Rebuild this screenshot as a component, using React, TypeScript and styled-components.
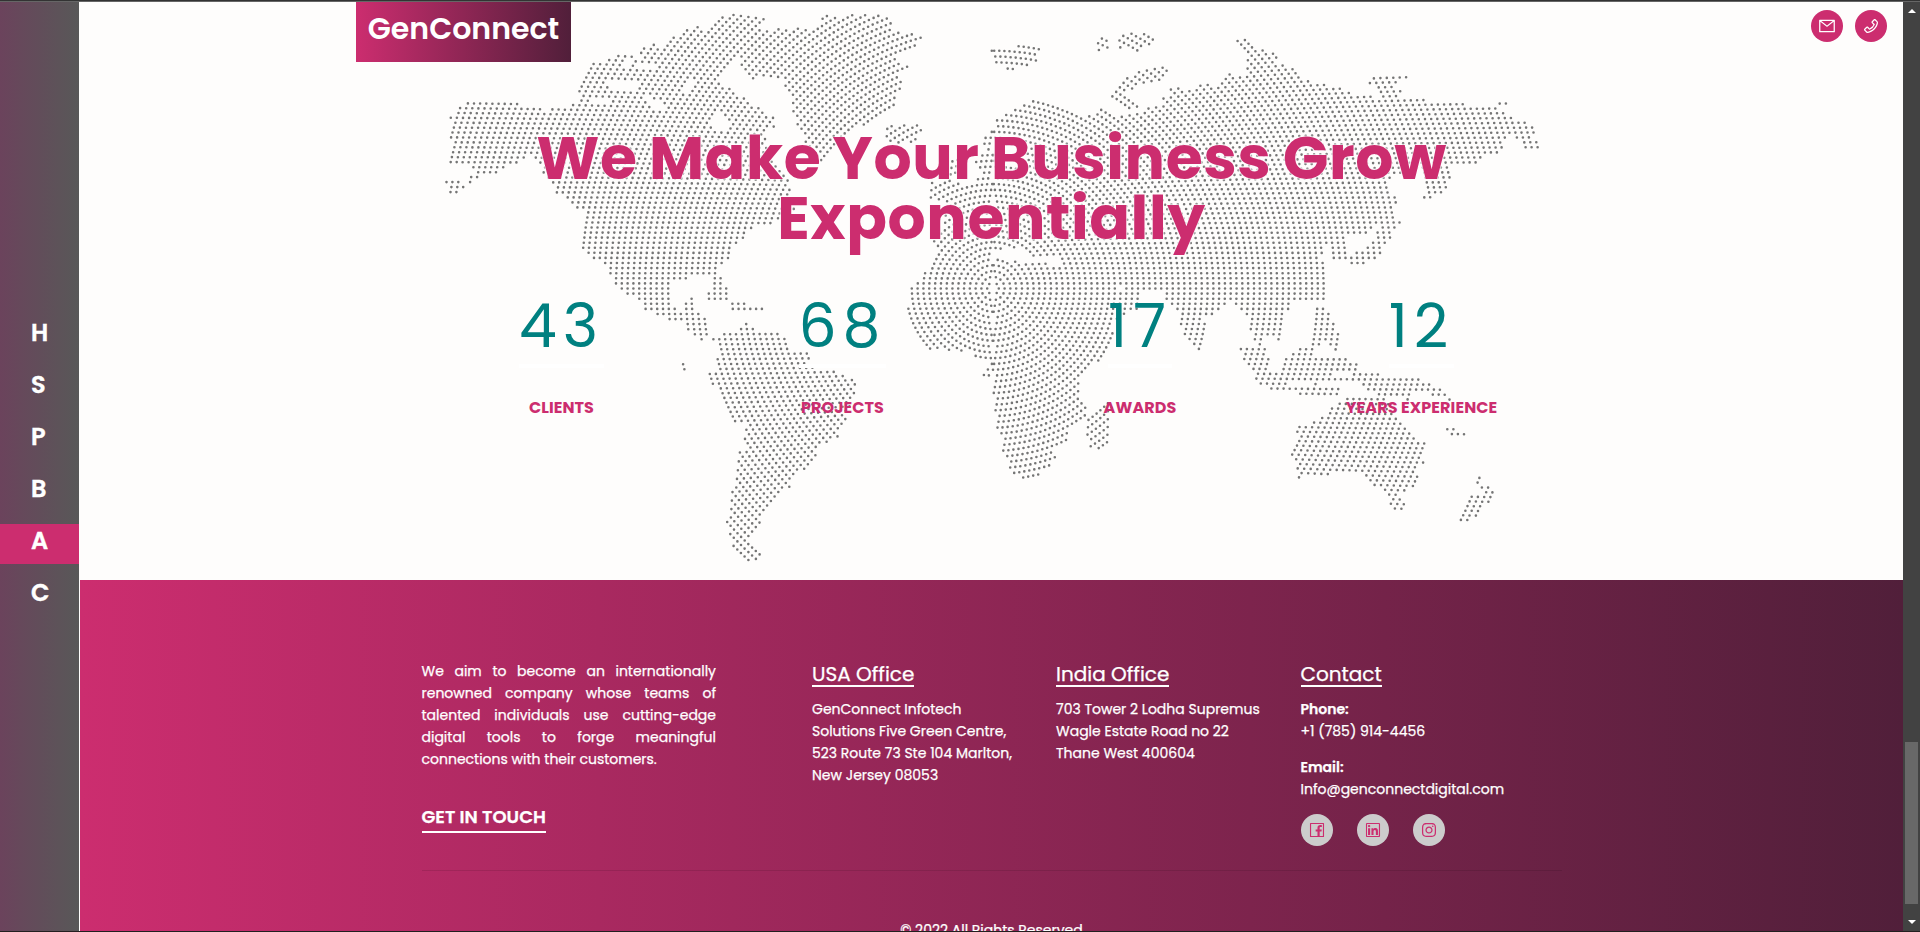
import React, { useMemo } from "react";
import styled, { createGlobalStyle } from "styled-components";
import {
  AiOutlineFacebook,
  AiOutlineInstagram,
  AiOutlineLinkedin,
  AiOutlineMail,
  AiOutlinePhone,
} from "react-icons/ai";

const PINK = "#cc2d6f";
const PLUM = "#511f3a";
const PAPER = "#fefdfc";

const GlobalStyle = createGlobalStyle`
  *, *::before, *::after { box-sizing: border-box; }
  body {
    margin: 0;
    background: ${PAPER};
    font-family: Poppins, Inter, "Liberation Sans", sans-serif;
    overflow: hidden;
  }
  h1, h2, p { margin: 0; }
`;

/* ---------- dotted world map ---------- */

type Point = [number, number];
type Outline = Point[];

const parse = (text: string): Outline =>
  text
    .trim()
    .split(/\s+/)
    .map((pair) => pair.split(",").map(Number) as Point);

/* The outlines are drawn on two sheets; origin and scale place each one. */
const sheet = (originX: number, scaleX: number, outlines: string[]): Outline[] =>
  outlines.map((text) =>
    parse(text).map(([x, y]) => [originX + x / scaleX, y / 3] as Point)
  );

const LAND: Outline[] = [
  ...sheet(430, 2.8, [
    // North and Central America
    `45,345 70,338 90,318 110,308 135,300 240,302 265,320 330,330 365,320 395,320 408,305
     418,292 412,280 430,215 460,183 480,188 530,165 570,170 590,190 590,150 625,130 645,145
     660,140 680,112 725,82 750,80 765,92 790,85 800,70 820,48 870,42 900,44 940,50 945,65
     930,85 905,120 862,172 845,190 820,205 803,238 825,255 860,280 890,300 920,318 935,345
     960,352 967,378 945,395 940,430 975,500 1000,535 1018,575 1000,592 1035,625 990,640
     975,662 945,680 915,675 890,702 855,732 842,755 832,787 815,792 812,815 816,853 830,860
     830,900 828,945 850,893 880,908 910,923 947,925 925,940 825,940 822,905 805,895 793,908
     772,898 775,875 790,880 790,835 760,832 740,828 715,838 680,838 668,842 668,925 682,908
     690,930 710,935 712,910 728,903 725,885 748,890 748,930 770,950 765,945 785,938 772,955
     777,1015 755,1025 738,1000 720,992 705,970 665,955 635,955 630,938 600,938 583,898
     560,885 550,885 535,875 517,852 503,832 500,795 470,785 443,770 427,745 427,700 440,655
     430,632 410,622 385,594 355,580 330,540 308,505 300,478 270,470 228,498 210,495 190,525
     140,520 95,490 45,492 50,460 75,430 45,420 55,385 75,355 48,355`,
    // Aleutian islands
    `45,545 70,540 98,552 103,524 150,520 120,542 100,565 68,580 45,572`,
    // Ellesmere island and Greenland
    `920,88 970,85 1085,85 1085,68 1100,48 1240,44 1290,44 1300,95 1330,97 1392,100 1365,132
     1340,157 1310,167 1305,188 1337,190 1337,215 1312,225 1322,258 1310,285 1302,332
     1250,360 1190,388 1165,405 1128,455 1105,490 1085,480 1060,440 1040,402 1018,378
     1022,340 1008,335 1018,320 1008,290 988,262 990,245 968,238 930,228 905,236 868,200
     862,172 905,120`,
    // Iceland
    `1273,402 1280,368 1315,378 1345,370 1378,378 1367,425 1310,438 1278,420`,
    // Galapagos
    `701,1090 711,1090 715,1114 705,1114`,
    // South America
    `788,1020 805,1008 835,990 860,990 880,968 900,980 915,995 965,990 985,1015 1005,1020
     1010,1050 1068,1053 1055,1090 1040,1102 1082,1102 1130,1115 1190,1140 1198,1150
     1187,1195 1167,1235 1162,1270 1140,1317 1105,1332 1087,1355 1082,1380 1047,1414
     1007,1435 1007,1467 975,1484 957,1510 937,1535 927,1575 907,1600 897,1630 912,1652
     934,1646 914,1684 880,1680 850,1647 833,1605 830,1565 843,1520 848,1460 860,1420
     860,1352 880,1358 880,1290 885,1262 848,1265 828,1220 813,1175 788,1158 776,1120
     798,1108 798,1080 810,1060 803,1035`,
  ]),
  ...sheet(960, 2.613, [
    // Europe and Asia
    `-90,592 -75,548 -30,535 10,550 40,540 60,530 50,512 33,490 63,450 63,415 73,398 93,380
     93,360 128,333 172,305 225,300 257,312 285,325 310,343 335,350 375,320 397,330 410,345
     440,347 478,335 500,318 525,325 525,303 540,285 555,260 600,268 632,248 670,260 678,232
     708,214 730,225 752,215 750,195 752,180 733,155 703,120 748,110 775,148 822,152 830,190
     872,200 895,240 937,250 1000,260 1020,275 1033,302 1035,284 1080,284 1100,302 1177,292
     1250,308 1397,318 1440,348 1497,376 1500,398 1450,402 1425,405 1417,460 1365,474
     1345,490 1278,488 1283,530 1267,580 1230,596 1207,595 1218,560 1213,530 1200,500
     1120,540 1122,580 1142,590 1132,640 1092,655 1087,670 1065,700 1010,708 1010,775
     976,778 973,742 950,740 940,778 961,788 963,900 935,900 868,897 867,930 850,930 850,970
     842,1023 820,1023 822,1005 797,1005 792,1037 770,1037 760,1000 747,990 752,960 738,935
     725,915 710,905 687,915 657,945 637,958 647,1000 642,1030 632,1052 603,1037 578,990
     566,970 573,930 548,915 533,885 530,873 478,873 478,900 462,930 425,945 402,975 397,1010
     392,1058 360,1085 342,1110 318,1125 312,1165 318,1200 333,1215 328,1245 290,1282
     283,1300 278,1335 250,1350 247,1387 218,1415 203,1438 133,1433 130,1390 118,1375
     108,1362 112,1330 103,1310 93,1290 88,1190 83,1145 60,1125 63,1098 80,1095 78,1078
     45,1072 20,1055 -20,1050 -69,1055 -99,1040 -128,985 -137,920 -139,880 -107,838 -88,808
     -80,785 -55,755 -70,725 -45,672 -42,612`,
    // Great Britain and Ireland
    `-30,478 15,478 18,520 -10,532 -40,525`,
    // Japan and Sakhalin
    `1100,640 1157,662 1137,690 1115,732 1100,772 1060,792 1030,808 1008,792 1033,755
     1065,740 1090,702`,
    // Kamchatka tip
    `1450,402 1475,402 1508,420 1510,444 1468,444`,
    // Svalbard
    `76,138 153,138 155,126 228,140 202,166 197,197 150,192 152,224 116,220 113,190 83,187`,
    // Franz Josef land
    `346,114 390,108 387,133 415,138 414,112 462,94 522,118 472,154 420,146 360,152`,
    // Novaya Zemlya
    `391,298 416,255 441,226 491,201 515,194 552,206 527,244 482,250 454,267 434,284 449,302
     484,322 462,334 414,320`,
    // New Siberian islands
    `1064,247 1076,226 1165,222 1194,242 1114,250 1154,272 1142,294 1103,294 1086,262`,
    `1400,302 1428,302 1428,312 1400,312`,
    // Madagascar
    `388,1195 402,1215 390,1265 392,1297 377,1354 350,1352 328,1320 333,1240 365,1225`,
    // Sumatra
    `733,1043 805,1043 812,1110 837,1122 857,1155 912,1163 912,1173 812,1172 773,1140
     733,1062`,
    // Borneo, Philippines and Sulawesi
    `838,1073 868,1062 890,1043 908,1043 910,1005 928,990 933,920 957,920 972,955 987,975
     992,1050 968,1052 960,1025 945,1025 927,1062 965,1077 1012,1076 1042,1090 1042,1113
     985,1114 965,1110 977,1130 955,1144 830,1144 843,1100`,
    // Java and Timor
    `888,1178 928,1148 940,1163 997,1163 994,1188 890,1188`,
    // New Guinea
    `978,1136 1028,1122 1097,1121 1140,1136 1197,1136 1232,1153 1267,1173 1282,1203
     1250,1192 1213,1173 1172,1176 1177,1204 1140,1192 1095,1190 1063,1172 1053,1152
     980,1145`,
    // Australia
    `1008,1194 1077,1194 1100,1185 1112,1200 1127,1225 1152,1268 1177,1298 1190,1314
     1217,1328 1212,1396 1192,1412 1197,1436 1182,1465 1152,1480 1167,1505 1150,1534
     1118,1516 1123,1495 1103,1472 1078,1460 1055,1432 1045,1418 967,1418 967,1430 893,1428
     890,1440 880,1440 876,1415 885,1400 864,1368 877,1340 878,1276 925,1268 948,1250
     973,1213`,
    // New Zealand
    `1358,1416 1374,1436 1362,1452 1387,1460 1408,1482 1377,1514 1352,1540 1337,1568
     1298,1568 1318,1523 1328,1490 1373,1490 1368,1470 1343,1452`,
    // New Caledonia
    `1268,1286 1292,1286 1322,1302 1318,1310 1295,1308 1268,1294`,
  ]),
];

const WATER: Outline[] = [
  ...sheet(430, 2.8, [
    `500,237 590,248 590,264 545,266 505,263`,
    `595,282 665,318 645,332 595,302`,
    `700,262 732,238 745,252 705,283`,
    `790,365 812,335 838,372 842,395 795,388`,
    `535,185 560,180 562,196 540,200`,
    `575,190 625,190 625,205 590,212`,
    `452,302 500,288 505,302 462,320`,
  ]),
  ...sheet(960, 2.613, [
    `82,752 110,745 165,745 185,772 245,772 268,785 265,796 205,785 140,785 82,772`,
    `412,858 430,858 430,872 412,872`,
    `110,480 150,500 180,470 150,440 120,450`,
  ]),
];

const contains = (outline: Outline, x: number, y: number) => {
  let inside = false;
  for (let i = 0, j = outline.length - 1; i < outline.length; j = i++) {
    const [xi, yi] = outline[i];
    const [xj, yj] = outline[j];
    if (yi > y !== yj > y && x < ((xj - xi) * (y - yi)) / (yj - yi) + xi) inside = !inside;
  }
  return inside;
};

/* Dots sit on concentric rings round central Africa, evenly spaced along each ring. */
const CENTER_X = 993;
const CENTER_Y = 288.5;
const RING_GAP = 5.8;
const DOT_GAP = 5.1;

const buildDots = () => {
  const parts: string[] = [];
  for (let ring = 1; ring <= 100; ring++) {
    const r = ring * RING_GAP;
    const count = Math.floor((r * Math.PI) / 2 / DOT_GAP);
    for (const side of [1, -1]) {
      for (let k = -count; k <= count; k++) {
        const angle = (k * DOT_GAP) / r;
        const x = CENTER_X + side * r * Math.cos(angle);
        const y = CENTER_Y + r * Math.sin(angle);
        if (
          LAND.some((o) => contains(o, x, y)) &&
          !WATER.some((o) => contains(o, x, y))
        ) {
          parts.push(`M${x.toFixed(1)} ${y.toFixed(1)}h0`);
        }
      }
    }
  }
  return parts.join("");
};

const MapSvg = styled.svg`
  position: absolute;
  left: 0;
  top: 0;
  width: 1823px;
  height: 578px;
`;

const WorldMap = () => {
  const d = useMemo(buildDots, []);
  return (
    <MapSvg viewBox="80 2 1823 578" aria-hidden="true">
      <path d={d} stroke="#757575" strokeWidth="2.6" strokeLinecap="round" fill="none" />
    </MapSvg>
  );
};

/* ---------- page frame ---------- */

const Window = styled.div`
  display: flex;
  height: 932px;
  border-top: 1px solid #333;
  border-bottom: 1px solid #231f20;
  overflow: hidden;
`;

const Frame = styled.div`
  display: flex;
  flex: 1;
  min-width: 0;
  border-top: 1px solid #666;
`;

const Sidebar = styled.nav`
  display: flex;
  flex-direction: column;
  justify-content: center;
  gap: 12px;
  width: 79px;
  padding-bottom: 2px;
  background: linear-gradient(90deg, #6b435c, #585858);
`;

const SideLink = styled.a<{ $active?: boolean }>`
  height: 40px;
  padding-left: 31px;
  color: #fff;
  font-size: 24px;
  font-weight: 600;
  line-height: 33px;
  -webkit-text-stroke: 0.4px #fff;
  background: ${(p) => (p.$active ? PINK : "transparent")};
`;

const Main = styled.main`
  display: flex;
  flex-direction: column;
  width: 1824px;
  padding-left: 1px;
  overflow: hidden;
`;

const Scrollbar = styled.div`
  display: flex;
  flex-direction: column;
  align-items: center;
  width: 17px;
  padding: 7px 0;
  background: #424242;
`;

const Arrow = styled.i<{ $down?: boolean }>`
  border: 4px solid transparent;
  border-top-width: ${(p) => (p.$down ? "4px" : "0")};
  border-bottom-width: ${(p) => (p.$down ? "0" : "4px")};
  border-${(p) => (p.$down ? "top" : "bottom")}-color: #fff;
`;

const Thumb = styled.div`
  width: 13px;
  height: 162px;
  margin: auto 0 16px;
  background: #686868;
`;

/* ---------- hero ---------- */

const Hero = styled.section`
  position: relative;
  height: 578px;
  flex: none;
  background: ${PAPER};
`;

const TopBar = styled.header`
  position: relative;
  display: flex;
  justify-content: space-between;
  height: 60px;
  padding: 0 16px 0 276px;
`;

const Logo = styled.div`
  width: 215px;
  height: 60px;
  color: #fff;
  font-size: 30px;
  font-weight: 600;
  line-height: 54px;
  text-align: center;
  background: linear-gradient(90deg, ${PINK}, ${PLUM});
`;

const Actions = styled.div<{ $gap: number }>`
  display: flex;
  gap: ${(p) => p.$gap}px;
`;

const RoundButton = styled.a<{ $light?: boolean }>`
  display: flex;
  align-items: center;
  justify-content: center;
  width: 32px;
  height: 32px;
  border-radius: 50%;
  color: ${(p) => (p.$light ? PINK : "#fff")};
  background: ${(p) => (p.$light ? "#cccccc" : PINK)};
`;

const TopActions = styled(Actions)`
  padding-top: 8px;
`;

const Headline = styled.h1`
  position: relative;
  margin-top: 66px;
  color: ${PINK};
  font-size: 60px;
  font-weight: 700;
  line-height: 60px;
  letter-spacing: 0.6px;
  word-spacing: -1.9px;
  text-align: center;
  text-shadow: 0 0 2px #fff, 0 0 2px #fff, 0 0 3px #fff;
`;

const Stats = styled.div`
  position: relative;
  display: grid;
  grid-template-columns: 281px 281px 314px 249px;
  padding-left: 341px;
  margin-top: 40px;
`;

const Stat = styled.div`
  display: flex;
  flex-direction: column;
  align-items: center;
`;

const Figure = styled.span`
  border-bottom: 4px solid #fff;
  color: #008080;
  font-size: 60px;
  line-height: 76px;
  letter-spacing: 6px;
`;

const Caption = styled.span`
  margin-top: 28px;
  color: ${PINK};
  font-size: 16px;
  font-weight: 700;
  line-height: 24px;
  letter-spacing: 0.08px;
`;

/* ---------- footer ---------- */

const Footer = styled.footer`
  flex: 1;
  min-height: 0;
  color: #fff;
  font-size: 14px;
  line-height: 22px;
  -webkit-text-stroke: 0.25px #fff;
  background: linear-gradient(90deg, ${PINK}, ${PLUM});
`;

const Container = styled.div`
  width: 1140px;
  margin: 0 auto;
  padding-top: 80px;
`;

const Columns = styled.div`
  display: grid;
  grid-template-columns: 390.5px 244px 244.5px 1fr;
  height: 210px;
`;

const Mission = styled.p`
  width: 294.5px;
  text-align: justify;
`;

const TouchLink = styled.a`
  display: inline-block;
  margin-top: 31px;
  border-bottom: 2px solid #fff;
  font-size: 18px;
  font-weight: 600;
  line-height: 28px;
  padding-top: 2px;
`;

const ColumnTitle = styled.h2`
  width: fit-content;
  margin-bottom: 11px;
  border-bottom: 2px solid #fff;
  font-size: 20px;
  font-weight: 400;
  line-height: 22px;
  padding-top: 3px;
`;

const Lines = styled.p`
  margin-bottom: 14px;
  white-space: pre-line;

  b {
    font-weight: 600;
  }
`;

const Legal = styled.div`
  border-top: 1px solid rgba(0, 0, 0, 0.1);
  padding-top: 48px;
  text-align: center;
`;

const NAV = ["H", "S", "P", "B", "A", "C"];

const STATS = [
  ["43", "CLIENTS"],
  ["68", "PROJECTS"],
  ["17", "AWARDS"],
  ["12", "YEARS EXPERIENCE"],
];

export default function App() {
  return (
    <Window>
      <GlobalStyle />
      <Frame>
        <Sidebar>
          {NAV.map((letter) => (
            <SideLink key={letter} $active={letter === "A"}>
              {letter}
            </SideLink>
          ))}
        </Sidebar>
        <Main>
          <Hero>
            <WorldMap />
            <TopBar>
              <Logo>GenConnect</Logo>
              <TopActions $gap={12}>
                <RoundButton>
                  <AiOutlineMail size={18} />
                </RoundButton>
                <RoundButton>
                  <AiOutlinePhone size={18} />
                </RoundButton>
              </TopActions>
            </TopBar>
            <Headline>
              We Make Your Business Grow
              <br />
              Exponentially
            </Headline>
            <Stats>
              {STATS.map(([value, label]) => (
                <Stat key={label}>
                  <Figure>{value}</Figure>
                  <Caption>{label}</Caption>
                </Stat>
              ))}
            </Stats>
          </Hero>
          <Footer>
            <Container>
              <Columns>
                <div>
                  <Mission>
                    We aim to become an internationally renowned company whose teams of
                    talented individuals use cutting-edge digital tools to forge meaningful
                    connections with their customers.
                  </Mission>
                  <TouchLink>GET IN TOUCH</TouchLink>
                </div>
                <div>
                  <ColumnTitle>USA Office</ColumnTitle>
                  <Lines>
                    {"GenConnect Infotech\nSolutions Five Green Centre,\n523 Route 73 Ste 104 Marlton,\nNew Jersey 08053"}
                  </Lines>
                </div>
                <div>
                  <ColumnTitle>India Office</ColumnTitle>
                  <Lines>
                    {"703 Tower 2 Lodha Supremus\nWagle Estate Road no 22\nThane West 400604"}
                  </Lines>
                </div>
                <div>
                  <ColumnTitle>Contact</ColumnTitle>
                  <Lines>
                    <b>Phone:</b>
                    {"\n+1 (785) 914-4456"}
                  </Lines>
                  <Lines>
                    <b>Email:</b>
                    {"\nInfo@genconnectdigital.com"}
                  </Lines>
                  <Actions $gap={24}>
                    <RoundButton $light>
                      <AiOutlineFacebook size={18} />
                    </RoundButton>
                    <RoundButton $light>
                      <AiOutlineLinkedin size={18} />
                    </RoundButton>
                    <RoundButton $light>
                      <AiOutlineInstagram size={18} />
                    </RoundButton>
                  </Actions>
                </div>
              </Columns>
              <Legal>© 2022 All Rights Reserved</Legal>
            </Container>
          </Footer>
        </Main>
        <Scrollbar>
          <Arrow />
          <Thumb />
          <Arrow $down />
        </Scrollbar>
      </Frame>
    </Window>
  );
}
